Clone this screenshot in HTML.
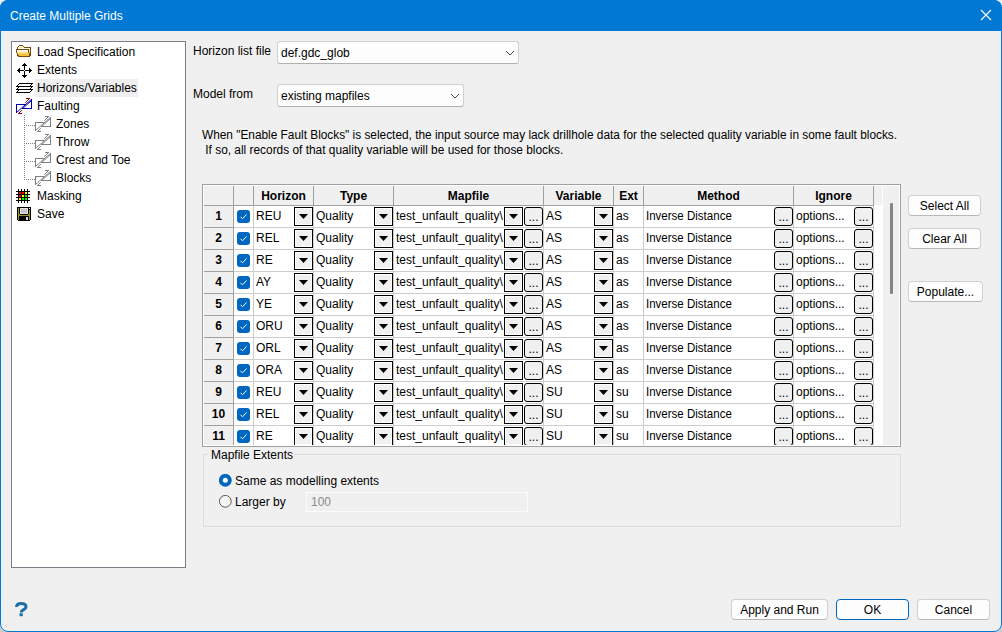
<!DOCTYPE html>
<html><head><meta charset="utf-8"><style>
html,body{margin:0;padding:0}
body{width:1002px;height:632px;position:relative;overflow:hidden;background:linear-gradient(#ececec 0 316px,#cdcdcd 316px);font-family:"Liberation Sans",sans-serif;font-size:12px;color:#000}
.a{position:absolute}
.t{position:absolute;white-space:nowrap;line-height:14px;font-size:12px}
.b{font-weight:bold}
.dd{width:19px;height:19px;box-sizing:border-box;border:1px solid #000;background:#f0f0f0;box-shadow:inset 0 0 0 1px #fff}
.el{width:19px;height:19px;box-sizing:border-box;border:1px solid #000;background:#f0f0f0;border-radius:3px}
.cb{width:13px;height:13px;background:#0067c0;border-radius:3px}
.btn{box-sizing:border-box;border:1px solid #d0d0d0;border-bottom-color:#b8b8b8;background:#fdfdfd;border-radius:4px}
</style></head>
<body>
<div class="a" style="left:0;top:0;width:1002px;height:632px;background:#f0f0f0;border-radius:8px"></div>
<div class="a" style="left:0;top:0;width:1002px;height:31px;background:#0078d4;border-radius:8px 8px 0 0"></div>
<div class="t" style="left:10px;top:9px;color:#fff">Create Multiple Grids</div>
<svg class="a" style="left:980px;top:9px" width="12" height="12" viewBox="0 0 12 12"><path d="M1 1L11 11M11 1L1 11" stroke="#fff" stroke-width="1.1"/></svg>
<div class="a" style="left:11px;top:41px;width:175px;height:527px;background:#fff;border:1px solid #7a7f88;box-sizing:border-box"></div>
<div class="a" style="left:35px;top:79px;width:103px;height:18px;background:#efefef"></div>
<div class="t" style="left:37px;top:45px;">Load Specification</div>
<div class="t" style="left:37px;top:63px;">Extents</div>
<div class="t" style="left:37px;top:81px;">Horizons/Variables</div>
<div class="t" style="left:37px;top:99px;">Faulting</div>
<div class="t" style="left:56px;top:117px;">Zones</div>
<div class="t" style="left:56px;top:135px;">Throw</div>
<div class="t" style="left:56px;top:153px;">Crest and Toe</div>
<div class="t" style="left:56px;top:171px;">Blocks</div>
<div class="t" style="left:37px;top:189px;">Masking</div>
<div class="t" style="left:37px;top:207px;">Save</div>
<svg class="a" style="left:16px;top:45px" width="15" height="12" viewBox="0 0 15 12" shape-rendering="crispEdges"><rect x="3" y="0" width="4" height="1" fill="#7a4a12"/><rect x="2" y="1" width="1" height="1" fill="#7a4a12"/><rect x="3" y="1" width="4" height="1" fill="#fffbee"/><rect x="7" y="1" width="1" height="1" fill="#7a4a12"/><rect x="1" y="2" width="1" height="1" fill="#7a4a12"/><rect x="2" y="2" width="1" height="1" fill="#fffbee"/><rect x="3" y="2" width="4" height="1" fill="#ffe48a"/><rect x="7" y="2" width="1" height="1" fill="#fffbee"/><rect x="8" y="2" width="7" height="1" fill="#7a4a12"/><rect x="1" y="3" width="1" height="1" fill="#7a4a12"/><rect x="2" y="3" width="12" height="1" fill="#fffbee"/><rect x="14" y="3" width="1" height="1" fill="#7a4a12"/><rect x="0" y="4" width="13" height="1" fill="#7a4a12"/><rect x="13" y="4" width="1" height="1" fill="#ffe48a"/><rect x="14" y="4" width="1" height="1" fill="#7a4a12"/><rect x="0" y="5" width="1" height="1" fill="#7a4a12"/><rect x="1" y="5" width="11" height="1" fill="#fffbee"/><rect x="12" y="5" width="1" height="1" fill="#7a4a12"/><rect x="13" y="5" width="1" height="1" fill="#ffe48a"/><rect x="14" y="5" width="1" height="1" fill="#7a4a12"/><rect x="0" y="6" width="1" height="1" fill="#7a4a12"/><rect x="1" y="6" width="11" height="1" fill="#fffbee"/><rect x="12" y="6" width="1" height="1" fill="#7a4a12"/><rect x="13" y="6" width="1" height="1" fill="#ffe48a"/><rect x="14" y="6" width="1" height="1" fill="#7a4a12"/><rect x="0" y="7" width="1" height="1" fill="#7a4a12"/><rect x="1" y="7" width="11" height="1" fill="#ffe27a"/><rect x="12" y="7" width="1" height="1" fill="#7a4a12"/><rect x="13" y="7" width="1" height="1" fill="#ffe48a"/><rect x="14" y="7" width="1" height="1" fill="#7a4a12"/><rect x="1" y="8" width="1" height="1" fill="#7a4a12"/><rect x="2" y="8" width="11" height="1" fill="#ffd45c"/><rect x="13" y="8" width="2" height="1" fill="#7a4a12"/><rect x="1" y="9" width="1" height="1" fill="#7a4a12"/><rect x="2" y="9" width="11" height="1" fill="#f8c040"/><rect x="13" y="9" width="2" height="1" fill="#7a4a12"/><rect x="1" y="10" width="2" height="1" fill="#7a4a12"/><rect x="3" y="10" width="10" height="1" fill="#f8c040"/><rect x="13" y="10" width="2" height="1" fill="#7a4a12"/><rect x="2" y="11" width="12" height="1" fill="#7a4a12"/></svg>
<svg class="a" style="left:17px;top:63px" width="15" height="15" viewBox="0 0 15 15" shape-rendering="crispEdges"><rect x="7" y="0" width="1" height="1" fill="#000"/><rect x="6" y="1" width="3" height="1" fill="#000"/><rect x="5" y="2" width="5" height="1" fill="#000"/><rect x="7" y="3" width="1" height="1" fill="#000"/><rect x="7" y="4" width="1" height="1" fill="#000"/><rect x="2" y="5" width="1" height="1" fill="#000"/><rect x="7" y="5" width="1" height="1" fill="#000"/><rect x="12" y="5" width="1" height="1" fill="#000"/><rect x="1" y="6" width="2" height="1" fill="#000"/><rect x="7" y="6" width="1" height="1" fill="#000"/><rect x="12" y="6" width="2" height="1" fill="#000"/><rect x="0" y="7" width="7" height="1" fill="#000"/><rect x="8" y="7" width="7" height="1" fill="#000"/><rect x="1" y="8" width="2" height="1" fill="#000"/><rect x="7" y="8" width="1" height="1" fill="#000"/><rect x="12" y="8" width="2" height="1" fill="#000"/><rect x="2" y="9" width="1" height="1" fill="#000"/><rect x="7" y="9" width="1" height="1" fill="#000"/><rect x="12" y="9" width="1" height="1" fill="#000"/><rect x="7" y="10" width="1" height="1" fill="#000"/><rect x="7" y="11" width="1" height="1" fill="#000"/><rect x="5" y="12" width="5" height="1" fill="#000"/><rect x="6" y="13" width="3" height="1" fill="#000"/><rect x="7" y="14" width="1" height="1" fill="#000"/></svg>
<svg class="a" style="left:16px;top:83px" width="17" height="10" viewBox="0 0 17 10" shape-rendering="crispEdges"><rect x="3" y="0" width="14" height="1" fill="#000"/><rect x="2" y="1" width="1" height="1" fill="#000"/><rect x="15" y="1" width="1" height="1" fill="#000"/><rect x="1" y="2" width="1" height="1" fill="#000"/><rect x="14" y="2" width="1" height="1" fill="#000"/><rect x="0" y="3" width="17" height="1" fill="#000"/><rect x="2" y="4" width="1" height="1" fill="#000"/><rect x="15" y="4" width="1" height="1" fill="#000"/><rect x="1" y="5" width="1" height="1" fill="#000"/><rect x="14" y="5" width="1" height="1" fill="#000"/><rect x="0" y="6" width="17" height="1" fill="#000"/><rect x="2" y="7" width="1" height="1" fill="#000"/><rect x="15" y="7" width="1" height="1" fill="#000"/><rect x="1" y="8" width="1" height="1" fill="#000"/><rect x="14" y="8" width="1" height="1" fill="#000"/><rect x="0" y="9" width="14" height="1" fill="#000"/></svg>
<svg class="a" style="left:16px;top:98px" width="17" height="17" viewBox="0 0 17 17"><path d="M0 6.5H9M0.5 6V15M0.3 14.7L15.6 1.2M15.5 1V11M6 10.5H16M6.6 10.6L15.4 2.6" fill="none" stroke="#0000a8" stroke-width="1.0"/><path d="M9.2 4.8L13.2 0.8M10 0.5H14M5.8 12.2L2.8 15.2M2 15.5H6" fill="none" stroke="#a00000" stroke-width="1.0"/></svg>
<svg class="a" style="left:35px;top:116px" width="17" height="17" viewBox="0 0 17 17"><path d="M0 6.5H9M0.5 6V15M0.3 14.7L15.6 1.2M15.5 1V11M6 10.5H16M6.6 10.6L15.4 2.6" fill="none" stroke="#808080" stroke-width="1.0"/><path d="M9.2 4.8L13.2 0.8M10 0.5H14M5.8 12.2L2.8 15.2M2 15.5H6" fill="none" stroke="#808080" stroke-width="1.0"/></svg>
<svg class="a" style="left:35px;top:134px" width="17" height="17" viewBox="0 0 17 17"><path d="M0 6.5H9M0.5 6V15M0.3 14.7L15.6 1.2M15.5 1V11M6 10.5H16M6.6 10.6L15.4 2.6" fill="none" stroke="#808080" stroke-width="1.0"/><path d="M9.2 4.8L13.2 0.8M10 0.5H14M5.8 12.2L2.8 15.2M2 15.5H6" fill="none" stroke="#808080" stroke-width="1.0"/></svg>
<svg class="a" style="left:35px;top:152px" width="17" height="17" viewBox="0 0 17 17"><path d="M0 6.5H9M0.5 6V15M0.3 14.7L15.6 1.2M15.5 1V11M6 10.5H16M6.6 10.6L15.4 2.6" fill="none" stroke="#808080" stroke-width="1.0"/><path d="M9.2 4.8L13.2 0.8M10 0.5H14M5.8 12.2L2.8 15.2M2 15.5H6" fill="none" stroke="#808080" stroke-width="1.0"/></svg>
<svg class="a" style="left:35px;top:170px" width="17" height="17" viewBox="0 0 17 17"><path d="M0 6.5H9M0.5 6V15M0.3 14.7L15.6 1.2M15.5 1V11M6 10.5H16M6.6 10.6L15.4 2.6" fill="none" stroke="#808080" stroke-width="1.0"/><path d="M9.2 4.8L13.2 0.8M10 0.5H14M5.8 12.2L2.8 15.2M2 15.5H6" fill="none" stroke="#808080" stroke-width="1.0"/></svg>
<div class="a" style="left:24px;top:115px;width:1px;height:65px;background:repeating-linear-gradient(#808080 0 1px,transparent 1px 2px)"></div>
<div class="a" style="left:26px;top:125px;width:9px;height:1px;background:repeating-linear-gradient(90deg,#808080 0 1px,transparent 1px 2px)"></div>
<div class="a" style="left:26px;top:143px;width:9px;height:1px;background:repeating-linear-gradient(90deg,#808080 0 1px,transparent 1px 2px)"></div>
<div class="a" style="left:26px;top:161px;width:9px;height:1px;background:repeating-linear-gradient(90deg,#808080 0 1px,transparent 1px 2px)"></div>
<div class="a" style="left:26px;top:179px;width:9px;height:1px;background:repeating-linear-gradient(90deg,#808080 0 1px,transparent 1px 2px)"></div>
<svg class="a" style="left:16px;top:189px" width="14" height="14" viewBox="0 0 14 14" shape-rendering="crispEdges"><rect x="2" y="0" width="1" height="1" fill="#000"/><rect x="5" y="0" width="1" height="1" fill="#000"/><rect x="8" y="0" width="1" height="1" fill="#000"/><rect x="11" y="0" width="1" height="1" fill="#000"/><rect x="2" y="1" width="1" height="1" fill="#000"/><rect x="5" y="1" width="1" height="1" fill="#000"/><rect x="8" y="1" width="1" height="1" fill="#000"/><rect x="11" y="1" width="1" height="1" fill="#000"/><rect x="0" y="2" width="14" height="1" fill="#000"/><rect x="2" y="3" width="1" height="1" fill="#000"/><rect x="3" y="3" width="2" height="1" fill="#ff0000"/><rect x="5" y="3" width="1" height="1" fill="#000"/><rect x="6" y="3" width="2" height="1" fill="#ff0000"/><rect x="8" y="3" width="1" height="1" fill="#000"/><rect x="9" y="3" width="2" height="1" fill="#ffff00"/><rect x="11" y="3" width="1" height="1" fill="#000"/><rect x="2" y="4" width="1" height="1" fill="#000"/><rect x="3" y="4" width="2" height="1" fill="#ff0000"/><rect x="5" y="4" width="1" height="1" fill="#000"/><rect x="6" y="4" width="2" height="1" fill="#ff0000"/><rect x="8" y="4" width="1" height="1" fill="#000"/><rect x="9" y="4" width="2" height="1" fill="#ffff00"/><rect x="11" y="4" width="1" height="1" fill="#000"/><rect x="0" y="5" width="14" height="1" fill="#000"/><rect x="2" y="6" width="1" height="1" fill="#000"/><rect x="3" y="6" width="2" height="1" fill="#ff0000"/><rect x="5" y="6" width="1" height="1" fill="#000"/><rect x="6" y="6" width="2" height="1" fill="#ffff00"/><rect x="8" y="6" width="1" height="1" fill="#000"/><rect x="9" y="6" width="2" height="1" fill="#00ff00"/><rect x="11" y="6" width="1" height="1" fill="#000"/><rect x="2" y="7" width="1" height="1" fill="#000"/><rect x="3" y="7" width="2" height="1" fill="#ff0000"/><rect x="5" y="7" width="1" height="1" fill="#000"/><rect x="6" y="7" width="2" height="1" fill="#ffff00"/><rect x="8" y="7" width="1" height="1" fill="#000"/><rect x="9" y="7" width="2" height="1" fill="#00ff00"/><rect x="11" y="7" width="1" height="1" fill="#000"/><rect x="0" y="8" width="14" height="1" fill="#000"/><rect x="2" y="9" width="1" height="1" fill="#000"/><rect x="3" y="9" width="2" height="1" fill="#ffff00"/><rect x="5" y="9" width="1" height="1" fill="#000"/><rect x="6" y="9" width="2" height="1" fill="#00ff00"/><rect x="8" y="9" width="1" height="1" fill="#000"/><rect x="9" y="9" width="2" height="1" fill="#00ff00"/><rect x="11" y="9" width="1" height="1" fill="#000"/><rect x="2" y="10" width="1" height="1" fill="#000"/><rect x="3" y="10" width="2" height="1" fill="#ffff00"/><rect x="5" y="10" width="1" height="1" fill="#000"/><rect x="6" y="10" width="2" height="1" fill="#00ff00"/><rect x="8" y="10" width="1" height="1" fill="#000"/><rect x="9" y="10" width="2" height="1" fill="#00ff00"/><rect x="11" y="10" width="1" height="1" fill="#000"/><rect x="0" y="11" width="14" height="1" fill="#000"/><rect x="2" y="12" width="1" height="1" fill="#000"/><rect x="5" y="12" width="1" height="1" fill="#000"/><rect x="8" y="12" width="1" height="1" fill="#000"/><rect x="11" y="12" width="1" height="1" fill="#000"/><rect x="2" y="13" width="1" height="1" fill="#000"/><rect x="5" y="13" width="1" height="1" fill="#000"/><rect x="8" y="13" width="1" height="1" fill="#000"/><rect x="11" y="13" width="1" height="1" fill="#000"/></svg>
<svg class="a" style="left:17px;top:207px" width="14" height="14" viewBox="0 0 14 14" shape-rendering="crispEdges"><rect x="0" y="0" width="14" height="1" fill="#000"/><rect x="0" y="1" width="1" height="1" fill="#000"/><rect x="1" y="1" width="1" height="1" fill="#9a9418"/><rect x="2" y="1" width="1" height="1" fill="#000"/><rect x="3" y="1" width="8" height="1" fill="#e4e4e4"/><rect x="11" y="1" width="1" height="1" fill="#000"/><rect x="12" y="1" width="1" height="1" fill="#fff"/><rect x="13" y="1" width="1" height="1" fill="#000"/><rect x="0" y="2" width="1" height="1" fill="#000"/><rect x="1" y="2" width="1" height="1" fill="#9a9418"/><rect x="2" y="2" width="1" height="1" fill="#000"/><rect x="3" y="2" width="1" height="1" fill="#e4e4e4"/><rect x="4" y="2" width="6" height="1" fill="#c4c4c4"/><rect x="10" y="2" width="1" height="1" fill="#e4e4e4"/><rect x="11" y="2" width="3" height="1" fill="#000"/><rect x="0" y="3" width="1" height="1" fill="#000"/><rect x="1" y="3" width="1" height="1" fill="#9a9418"/><rect x="2" y="3" width="1" height="1" fill="#000"/><rect x="3" y="3" width="1" height="1" fill="#e4e4e4"/><rect x="4" y="3" width="6" height="1" fill="#c4c4c4"/><rect x="10" y="3" width="1" height="1" fill="#e4e4e4"/><rect x="11" y="3" width="1" height="1" fill="#000"/><rect x="12" y="3" width="1" height="1" fill="#9a9418"/><rect x="13" y="3" width="1" height="1" fill="#000"/><rect x="0" y="4" width="1" height="1" fill="#000"/><rect x="1" y="4" width="1" height="1" fill="#9a9418"/><rect x="2" y="4" width="1" height="1" fill="#000"/><rect x="3" y="4" width="1" height="1" fill="#e4e4e4"/><rect x="4" y="4" width="6" height="1" fill="#c4c4c4"/><rect x="10" y="4" width="1" height="1" fill="#e4e4e4"/><rect x="11" y="4" width="1" height="1" fill="#000"/><rect x="12" y="4" width="1" height="1" fill="#9a9418"/><rect x="13" y="4" width="1" height="1" fill="#000"/><rect x="0" y="5" width="1" height="1" fill="#000"/><rect x="1" y="5" width="1" height="1" fill="#9a9418"/><rect x="2" y="5" width="1" height="1" fill="#000"/><rect x="3" y="5" width="1" height="1" fill="#e4e4e4"/><rect x="4" y="5" width="6" height="1" fill="#c4c4c4"/><rect x="10" y="5" width="1" height="1" fill="#e4e4e4"/><rect x="11" y="5" width="1" height="1" fill="#000"/><rect x="12" y="5" width="1" height="1" fill="#9a9418"/><rect x="13" y="5" width="1" height="1" fill="#000"/><rect x="0" y="6" width="1" height="1" fill="#000"/><rect x="1" y="6" width="1" height="1" fill="#9a9418"/><rect x="2" y="6" width="1" height="1" fill="#000"/><rect x="3" y="6" width="8" height="1" fill="#e4e4e4"/><rect x="11" y="6" width="1" height="1" fill="#000"/><rect x="12" y="6" width="1" height="1" fill="#9a9418"/><rect x="13" y="6" width="1" height="1" fill="#000"/><rect x="0" y="7" width="1" height="1" fill="#000"/><rect x="1" y="7" width="2" height="1" fill="#9a9418"/><rect x="3" y="7" width="8" height="1" fill="#000"/><rect x="11" y="7" width="2" height="1" fill="#9a9418"/><rect x="13" y="7" width="1" height="1" fill="#000"/><rect x="0" y="8" width="1" height="1" fill="#000"/><rect x="1" y="8" width="12" height="1" fill="#9a9418"/><rect x="13" y="8" width="1" height="1" fill="#000"/><rect x="0" y="9" width="1" height="1" fill="#000"/><rect x="1" y="9" width="1" height="1" fill="#9a9418"/><rect x="2" y="9" width="10" height="1" fill="#000"/><rect x="12" y="9" width="1" height="1" fill="#9a9418"/><rect x="13" y="9" width="1" height="1" fill="#000"/><rect x="0" y="10" width="1" height="1" fill="#000"/><rect x="1" y="10" width="1" height="1" fill="#9a9418"/><rect x="2" y="10" width="7" height="1" fill="#000"/><rect x="9" y="10" width="2" height="1" fill="#d8d8d8"/><rect x="11" y="10" width="1" height="1" fill="#000"/><rect x="12" y="10" width="1" height="1" fill="#9a9418"/><rect x="13" y="10" width="1" height="1" fill="#000"/><rect x="0" y="11" width="1" height="1" fill="#000"/><rect x="1" y="11" width="1" height="1" fill="#9a9418"/><rect x="2" y="11" width="7" height="1" fill="#000"/><rect x="9" y="11" width="2" height="1" fill="#d8d8d8"/><rect x="11" y="11" width="1" height="1" fill="#000"/><rect x="12" y="11" width="1" height="1" fill="#9a9418"/><rect x="13" y="11" width="1" height="1" fill="#000"/><rect x="0" y="12" width="1" height="1" fill="#000"/><rect x="1" y="12" width="1" height="1" fill="#9a9418"/><rect x="2" y="12" width="7" height="1" fill="#000"/><rect x="9" y="12" width="2" height="1" fill="#d8d8d8"/><rect x="11" y="12" width="1" height="1" fill="#000"/><rect x="12" y="12" width="1" height="1" fill="#9a9418"/><rect x="13" y="12" width="1" height="1" fill="#000"/><rect x="1" y="13" width="12" height="1" fill="#000"/></svg>
<div class="t" style="left:193px;top:44px;">Horizon list file</div>
<div class="a" style="left:277px;top:41px;width:242px;height:23px;background:#fdfdfd;border:1px solid #d0d0d0;border-bottom-color:#b0b0b0;border-radius:3px;box-sizing:border-box"></div>
<div class="t" style="left:281px;top:46px;">def.gdc_glob</div>
<svg class="a" style="left:505px;top:50px" width="10" height="6" viewBox="0 0 10 6"><path d="M1 1L5 5L9 1" fill="none" stroke="#484848" stroke-width="1"/></svg>
<div class="t" style="left:193px;top:87px;">Model from</div>
<div class="a" style="left:277px;top:84px;width:187px;height:23px;background:#fdfdfd;border:1px solid #d0d0d0;border-bottom-color:#b0b0b0;border-radius:3px;box-sizing:border-box"></div>
<div class="t" style="left:281px;top:89px;">existing mapfiles</div>
<svg class="a" style="left:450px;top:93px" width="10" height="6" viewBox="0 0 10 6"><path d="M1 1L5 5L9 1" fill="none" stroke="#484848" stroke-width="1"/></svg>
<div class="t" style="left:202px;top:128px;white-space:pre;transform:scaleX(0.987);transform-origin:0 0">When "Enable Fault Blocks" is selected, the input source may lack drillhole data for the selected quality variable in some fault blocks.</div>
<div class="t" style="left:202px;top:143px;white-space:pre;transform:scaleX(0.99);transform-origin:0 0"> If so, all records of that quality variable will be used for those blocks.</div>
<div class="a" style="left:202px;top:184px;width:699px;height:263px;background:#fff;border:1px solid #a0a0a0;box-sizing:border-box"></div>
<div class="a" style="left:204px;top:186px;width:695px;height:259px;overflow:hidden">
<div class="a" style="left:0px;top:0px;width:678px;height:19px;background:#f0f0f0"></div>
<div class="a" style="left:0px;top:20px;width:29px;height:240px;background:#f0f0f0"></div>
<div class="a" style="left:0px;top:19px;width:670px;height:1px;background:#a0a0a0"></div>
<div class="a" style="left:0px;top:41px;width:29px;height:1px;background:#a0a0a0"></div>
<div class="a" style="left:30px;top:41px;width:640px;height:1px;background:#cdcdcd"></div>
<div class="a" style="left:0px;top:63px;width:29px;height:1px;background:#a0a0a0"></div>
<div class="a" style="left:30px;top:63px;width:640px;height:1px;background:#cdcdcd"></div>
<div class="a" style="left:0px;top:85px;width:29px;height:1px;background:#a0a0a0"></div>
<div class="a" style="left:30px;top:85px;width:640px;height:1px;background:#cdcdcd"></div>
<div class="a" style="left:0px;top:107px;width:29px;height:1px;background:#a0a0a0"></div>
<div class="a" style="left:30px;top:107px;width:640px;height:1px;background:#cdcdcd"></div>
<div class="a" style="left:0px;top:129px;width:29px;height:1px;background:#a0a0a0"></div>
<div class="a" style="left:30px;top:129px;width:640px;height:1px;background:#cdcdcd"></div>
<div class="a" style="left:0px;top:151px;width:29px;height:1px;background:#a0a0a0"></div>
<div class="a" style="left:30px;top:151px;width:640px;height:1px;background:#cdcdcd"></div>
<div class="a" style="left:0px;top:173px;width:29px;height:1px;background:#a0a0a0"></div>
<div class="a" style="left:30px;top:173px;width:640px;height:1px;background:#cdcdcd"></div>
<div class="a" style="left:0px;top:195px;width:29px;height:1px;background:#a0a0a0"></div>
<div class="a" style="left:30px;top:195px;width:640px;height:1px;background:#cdcdcd"></div>
<div class="a" style="left:0px;top:217px;width:29px;height:1px;background:#a0a0a0"></div>
<div class="a" style="left:30px;top:217px;width:640px;height:1px;background:#cdcdcd"></div>
<div class="a" style="left:0px;top:239px;width:29px;height:1px;background:#a0a0a0"></div>
<div class="a" style="left:30px;top:239px;width:640px;height:1px;background:#cdcdcd"></div>
<div class="a" style="left:0px;top:261px;width:29px;height:1px;background:#a0a0a0"></div>
<div class="a" style="left:30px;top:261px;width:640px;height:1px;background:#cdcdcd"></div>
<div class="a" style="left:29px;top:0px;width:1px;height:19px;background:#a0a0a0"></div>
<div class="a" style="left:29px;top:20px;width:1px;height:240px;background:#a0a0a0"></div>
<div class="a" style="left:49px;top:0px;width:1px;height:19px;background:#a0a0a0"></div>
<div class="a" style="left:49px;top:20px;width:1px;height:240px;background:#cdcdcd"></div>
<div class="a" style="left:109px;top:0px;width:1px;height:19px;background:#a0a0a0"></div>
<div class="a" style="left:109px;top:20px;width:1px;height:240px;background:#cdcdcd"></div>
<div class="t b" style="left:50px;top:3px;width:59px;text-align:center">Horizon</div>
<div class="a" style="left:189px;top:0px;width:1px;height:19px;background:#a0a0a0"></div>
<div class="a" style="left:189px;top:20px;width:1px;height:240px;background:#cdcdcd"></div>
<div class="t b" style="left:110px;top:3px;width:79px;text-align:center">Type</div>
<div class="a" style="left:339px;top:0px;width:1px;height:19px;background:#a0a0a0"></div>
<div class="a" style="left:339px;top:20px;width:1px;height:240px;background:#cdcdcd"></div>
<div class="t b" style="left:190px;top:3px;width:149px;text-align:center">Mapfile</div>
<div class="a" style="left:409px;top:0px;width:1px;height:19px;background:#a0a0a0"></div>
<div class="a" style="left:409px;top:20px;width:1px;height:240px;background:#cdcdcd"></div>
<div class="t b" style="left:340px;top:3px;width:69px;text-align:center">Variable</div>
<div class="a" style="left:439px;top:0px;width:1px;height:19px;background:#a0a0a0"></div>
<div class="a" style="left:439px;top:20px;width:1px;height:240px;background:#cdcdcd"></div>
<div class="t b" style="left:410px;top:3px;width:29px;text-align:center">Ext</div>
<div class="a" style="left:589px;top:0px;width:1px;height:19px;background:#a0a0a0"></div>
<div class="a" style="left:589px;top:20px;width:1px;height:240px;background:#cdcdcd"></div>
<div class="t b" style="left:440px;top:3px;width:149px;text-align:center">Method</div>
<div class="a" style="left:669px;top:0px;width:1px;height:19px;background:#a0a0a0"></div>
<div class="a" style="left:669px;top:20px;width:1px;height:240px;background:#cdcdcd"></div>
<div class="t b" style="left:590px;top:3px;width:79px;text-align:center">Ignore</div>
<div class="a" style="left:679px;top:0px;width:16px;height:260px;background:#f0f0f0"></div>
<div class="a" style="left:686px;top:17px;width:3px;height:91px;background:#858585;border-radius:1px"></div>
<div class="t b" style="left:0px;top:23px;width:29px;text-align:center">1</div>
<div class="a cb" style="left:33px;top:24px"><svg width="13" height="13" viewBox="0 0 13 13" style="position:absolute;left:0;top:0"><path d="M3.5 6.8L5.5 8.8L9.5 4.5" fill="none" stroke="#fff" stroke-width="1"/></svg></div>
<div class="t" style="left:52px;top:23px;">REU</div>
<div class="a dd" style="left:90px;top:21px"><svg width="9" height="5" style="position:absolute;left:4px;top:6px"><path d="M0 0H9L4.5 5Z" fill="#000"/></svg></div>
<div class="t" style="left:112px;top:23px;">Quality</div>
<div class="a dd" style="left:170px;top:21px"><svg width="9" height="5" style="position:absolute;left:4px;top:6px"><path d="M0 0H9L4.5 5Z" fill="#000"/></svg></div>
<div class="a" style="left:192px;top:23px;width:108px;height:14px;overflow:hidden"><div class="t" style="left:0;top:0">test_unfault_quality\</div></div>
<div class="a dd" style="left:300px;top:21px"><svg width="9" height="5" style="position:absolute;left:4px;top:6px"><path d="M0 0H9L4.5 5Z" fill="#000"/></svg></div>
<div class="a el" style="left:320px;top:21px"><div class="t" style="left:0;top:2px;width:17px;text-align:center">...</div></div>
<div class="t" style="left:342px;top:23px;">AS</div>
<div class="a dd" style="left:390px;top:21px"><svg width="9" height="5" style="position:absolute;left:4px;top:6px"><path d="M0 0H9L4.5 5Z" fill="#000"/></svg></div>
<div class="t" style="left:412px;top:23px;">as</div>
<div class="t" style="left:442px;top:23px;transform:scaleX(0.96);transform-origin:0 0">Inverse Distance</div>
<div class="a el" style="left:570px;top:21px"><div class="t" style="left:0;top:2px;width:17px;text-align:center">...</div></div>
<div class="t" style="left:592px;top:23px;">options...</div>
<div class="a el" style="left:650px;top:21px"><div class="t" style="left:0;top:2px;width:17px;text-align:center">...</div></div>
<div class="t b" style="left:0px;top:45px;width:29px;text-align:center">2</div>
<div class="a cb" style="left:33px;top:46px"><svg width="13" height="13" viewBox="0 0 13 13" style="position:absolute;left:0;top:0"><path d="M3.5 6.8L5.5 8.8L9.5 4.5" fill="none" stroke="#fff" stroke-width="1"/></svg></div>
<div class="t" style="left:52px;top:45px;">REL</div>
<div class="a dd" style="left:90px;top:43px"><svg width="9" height="5" style="position:absolute;left:4px;top:6px"><path d="M0 0H9L4.5 5Z" fill="#000"/></svg></div>
<div class="t" style="left:112px;top:45px;">Quality</div>
<div class="a dd" style="left:170px;top:43px"><svg width="9" height="5" style="position:absolute;left:4px;top:6px"><path d="M0 0H9L4.5 5Z" fill="#000"/></svg></div>
<div class="a" style="left:192px;top:45px;width:108px;height:14px;overflow:hidden"><div class="t" style="left:0;top:0">test_unfault_quality\</div></div>
<div class="a dd" style="left:300px;top:43px"><svg width="9" height="5" style="position:absolute;left:4px;top:6px"><path d="M0 0H9L4.5 5Z" fill="#000"/></svg></div>
<div class="a el" style="left:320px;top:43px"><div class="t" style="left:0;top:2px;width:17px;text-align:center">...</div></div>
<div class="t" style="left:342px;top:45px;">AS</div>
<div class="a dd" style="left:390px;top:43px"><svg width="9" height="5" style="position:absolute;left:4px;top:6px"><path d="M0 0H9L4.5 5Z" fill="#000"/></svg></div>
<div class="t" style="left:412px;top:45px;">as</div>
<div class="t" style="left:442px;top:45px;transform:scaleX(0.96);transform-origin:0 0">Inverse Distance</div>
<div class="a el" style="left:570px;top:43px"><div class="t" style="left:0;top:2px;width:17px;text-align:center">...</div></div>
<div class="t" style="left:592px;top:45px;">options...</div>
<div class="a el" style="left:650px;top:43px"><div class="t" style="left:0;top:2px;width:17px;text-align:center">...</div></div>
<div class="t b" style="left:0px;top:67px;width:29px;text-align:center">3</div>
<div class="a cb" style="left:33px;top:68px"><svg width="13" height="13" viewBox="0 0 13 13" style="position:absolute;left:0;top:0"><path d="M3.5 6.8L5.5 8.8L9.5 4.5" fill="none" stroke="#fff" stroke-width="1"/></svg></div>
<div class="t" style="left:52px;top:67px;">RE</div>
<div class="a dd" style="left:90px;top:65px"><svg width="9" height="5" style="position:absolute;left:4px;top:6px"><path d="M0 0H9L4.5 5Z" fill="#000"/></svg></div>
<div class="t" style="left:112px;top:67px;">Quality</div>
<div class="a dd" style="left:170px;top:65px"><svg width="9" height="5" style="position:absolute;left:4px;top:6px"><path d="M0 0H9L4.5 5Z" fill="#000"/></svg></div>
<div class="a" style="left:192px;top:67px;width:108px;height:14px;overflow:hidden"><div class="t" style="left:0;top:0">test_unfault_quality\</div></div>
<div class="a dd" style="left:300px;top:65px"><svg width="9" height="5" style="position:absolute;left:4px;top:6px"><path d="M0 0H9L4.5 5Z" fill="#000"/></svg></div>
<div class="a el" style="left:320px;top:65px"><div class="t" style="left:0;top:2px;width:17px;text-align:center">...</div></div>
<div class="t" style="left:342px;top:67px;">AS</div>
<div class="a dd" style="left:390px;top:65px"><svg width="9" height="5" style="position:absolute;left:4px;top:6px"><path d="M0 0H9L4.5 5Z" fill="#000"/></svg></div>
<div class="t" style="left:412px;top:67px;">as</div>
<div class="t" style="left:442px;top:67px;transform:scaleX(0.96);transform-origin:0 0">Inverse Distance</div>
<div class="a el" style="left:570px;top:65px"><div class="t" style="left:0;top:2px;width:17px;text-align:center">...</div></div>
<div class="t" style="left:592px;top:67px;">options...</div>
<div class="a el" style="left:650px;top:65px"><div class="t" style="left:0;top:2px;width:17px;text-align:center">...</div></div>
<div class="t b" style="left:0px;top:89px;width:29px;text-align:center">4</div>
<div class="a cb" style="left:33px;top:90px"><svg width="13" height="13" viewBox="0 0 13 13" style="position:absolute;left:0;top:0"><path d="M3.5 6.8L5.5 8.8L9.5 4.5" fill="none" stroke="#fff" stroke-width="1"/></svg></div>
<div class="t" style="left:52px;top:89px;">AY</div>
<div class="a dd" style="left:90px;top:87px"><svg width="9" height="5" style="position:absolute;left:4px;top:6px"><path d="M0 0H9L4.5 5Z" fill="#000"/></svg></div>
<div class="t" style="left:112px;top:89px;">Quality</div>
<div class="a dd" style="left:170px;top:87px"><svg width="9" height="5" style="position:absolute;left:4px;top:6px"><path d="M0 0H9L4.5 5Z" fill="#000"/></svg></div>
<div class="a" style="left:192px;top:89px;width:108px;height:14px;overflow:hidden"><div class="t" style="left:0;top:0">test_unfault_quality\</div></div>
<div class="a dd" style="left:300px;top:87px"><svg width="9" height="5" style="position:absolute;left:4px;top:6px"><path d="M0 0H9L4.5 5Z" fill="#000"/></svg></div>
<div class="a el" style="left:320px;top:87px"><div class="t" style="left:0;top:2px;width:17px;text-align:center">...</div></div>
<div class="t" style="left:342px;top:89px;">AS</div>
<div class="a dd" style="left:390px;top:87px"><svg width="9" height="5" style="position:absolute;left:4px;top:6px"><path d="M0 0H9L4.5 5Z" fill="#000"/></svg></div>
<div class="t" style="left:412px;top:89px;">as</div>
<div class="t" style="left:442px;top:89px;transform:scaleX(0.96);transform-origin:0 0">Inverse Distance</div>
<div class="a el" style="left:570px;top:87px"><div class="t" style="left:0;top:2px;width:17px;text-align:center">...</div></div>
<div class="t" style="left:592px;top:89px;">options...</div>
<div class="a el" style="left:650px;top:87px"><div class="t" style="left:0;top:2px;width:17px;text-align:center">...</div></div>
<div class="t b" style="left:0px;top:111px;width:29px;text-align:center">5</div>
<div class="a cb" style="left:33px;top:112px"><svg width="13" height="13" viewBox="0 0 13 13" style="position:absolute;left:0;top:0"><path d="M3.5 6.8L5.5 8.8L9.5 4.5" fill="none" stroke="#fff" stroke-width="1"/></svg></div>
<div class="t" style="left:52px;top:111px;">YE</div>
<div class="a dd" style="left:90px;top:109px"><svg width="9" height="5" style="position:absolute;left:4px;top:6px"><path d="M0 0H9L4.5 5Z" fill="#000"/></svg></div>
<div class="t" style="left:112px;top:111px;">Quality</div>
<div class="a dd" style="left:170px;top:109px"><svg width="9" height="5" style="position:absolute;left:4px;top:6px"><path d="M0 0H9L4.5 5Z" fill="#000"/></svg></div>
<div class="a" style="left:192px;top:111px;width:108px;height:14px;overflow:hidden"><div class="t" style="left:0;top:0">test_unfault_quality\</div></div>
<div class="a dd" style="left:300px;top:109px"><svg width="9" height="5" style="position:absolute;left:4px;top:6px"><path d="M0 0H9L4.5 5Z" fill="#000"/></svg></div>
<div class="a el" style="left:320px;top:109px"><div class="t" style="left:0;top:2px;width:17px;text-align:center">...</div></div>
<div class="t" style="left:342px;top:111px;">AS</div>
<div class="a dd" style="left:390px;top:109px"><svg width="9" height="5" style="position:absolute;left:4px;top:6px"><path d="M0 0H9L4.5 5Z" fill="#000"/></svg></div>
<div class="t" style="left:412px;top:111px;">as</div>
<div class="t" style="left:442px;top:111px;transform:scaleX(0.96);transform-origin:0 0">Inverse Distance</div>
<div class="a el" style="left:570px;top:109px"><div class="t" style="left:0;top:2px;width:17px;text-align:center">...</div></div>
<div class="t" style="left:592px;top:111px;">options...</div>
<div class="a el" style="left:650px;top:109px"><div class="t" style="left:0;top:2px;width:17px;text-align:center">...</div></div>
<div class="t b" style="left:0px;top:133px;width:29px;text-align:center">6</div>
<div class="a cb" style="left:33px;top:134px"><svg width="13" height="13" viewBox="0 0 13 13" style="position:absolute;left:0;top:0"><path d="M3.5 6.8L5.5 8.8L9.5 4.5" fill="none" stroke="#fff" stroke-width="1"/></svg></div>
<div class="t" style="left:52px;top:133px;">ORU</div>
<div class="a dd" style="left:90px;top:131px"><svg width="9" height="5" style="position:absolute;left:4px;top:6px"><path d="M0 0H9L4.5 5Z" fill="#000"/></svg></div>
<div class="t" style="left:112px;top:133px;">Quality</div>
<div class="a dd" style="left:170px;top:131px"><svg width="9" height="5" style="position:absolute;left:4px;top:6px"><path d="M0 0H9L4.5 5Z" fill="#000"/></svg></div>
<div class="a" style="left:192px;top:133px;width:108px;height:14px;overflow:hidden"><div class="t" style="left:0;top:0">test_unfault_quality\</div></div>
<div class="a dd" style="left:300px;top:131px"><svg width="9" height="5" style="position:absolute;left:4px;top:6px"><path d="M0 0H9L4.5 5Z" fill="#000"/></svg></div>
<div class="a el" style="left:320px;top:131px"><div class="t" style="left:0;top:2px;width:17px;text-align:center">...</div></div>
<div class="t" style="left:342px;top:133px;">AS</div>
<div class="a dd" style="left:390px;top:131px"><svg width="9" height="5" style="position:absolute;left:4px;top:6px"><path d="M0 0H9L4.5 5Z" fill="#000"/></svg></div>
<div class="t" style="left:412px;top:133px;">as</div>
<div class="t" style="left:442px;top:133px;transform:scaleX(0.96);transform-origin:0 0">Inverse Distance</div>
<div class="a el" style="left:570px;top:131px"><div class="t" style="left:0;top:2px;width:17px;text-align:center">...</div></div>
<div class="t" style="left:592px;top:133px;">options...</div>
<div class="a el" style="left:650px;top:131px"><div class="t" style="left:0;top:2px;width:17px;text-align:center">...</div></div>
<div class="t b" style="left:0px;top:155px;width:29px;text-align:center">7</div>
<div class="a cb" style="left:33px;top:156px"><svg width="13" height="13" viewBox="0 0 13 13" style="position:absolute;left:0;top:0"><path d="M3.5 6.8L5.5 8.8L9.5 4.5" fill="none" stroke="#fff" stroke-width="1"/></svg></div>
<div class="t" style="left:52px;top:155px;">ORL</div>
<div class="a dd" style="left:90px;top:153px"><svg width="9" height="5" style="position:absolute;left:4px;top:6px"><path d="M0 0H9L4.5 5Z" fill="#000"/></svg></div>
<div class="t" style="left:112px;top:155px;">Quality</div>
<div class="a dd" style="left:170px;top:153px"><svg width="9" height="5" style="position:absolute;left:4px;top:6px"><path d="M0 0H9L4.5 5Z" fill="#000"/></svg></div>
<div class="a" style="left:192px;top:155px;width:108px;height:14px;overflow:hidden"><div class="t" style="left:0;top:0">test_unfault_quality\</div></div>
<div class="a dd" style="left:300px;top:153px"><svg width="9" height="5" style="position:absolute;left:4px;top:6px"><path d="M0 0H9L4.5 5Z" fill="#000"/></svg></div>
<div class="a el" style="left:320px;top:153px"><div class="t" style="left:0;top:2px;width:17px;text-align:center">...</div></div>
<div class="t" style="left:342px;top:155px;">AS</div>
<div class="a dd" style="left:390px;top:153px"><svg width="9" height="5" style="position:absolute;left:4px;top:6px"><path d="M0 0H9L4.5 5Z" fill="#000"/></svg></div>
<div class="t" style="left:412px;top:155px;">as</div>
<div class="t" style="left:442px;top:155px;transform:scaleX(0.96);transform-origin:0 0">Inverse Distance</div>
<div class="a el" style="left:570px;top:153px"><div class="t" style="left:0;top:2px;width:17px;text-align:center">...</div></div>
<div class="t" style="left:592px;top:155px;">options...</div>
<div class="a el" style="left:650px;top:153px"><div class="t" style="left:0;top:2px;width:17px;text-align:center">...</div></div>
<div class="t b" style="left:0px;top:177px;width:29px;text-align:center">8</div>
<div class="a cb" style="left:33px;top:178px"><svg width="13" height="13" viewBox="0 0 13 13" style="position:absolute;left:0;top:0"><path d="M3.5 6.8L5.5 8.8L9.5 4.5" fill="none" stroke="#fff" stroke-width="1"/></svg></div>
<div class="t" style="left:52px;top:177px;">ORA</div>
<div class="a dd" style="left:90px;top:175px"><svg width="9" height="5" style="position:absolute;left:4px;top:6px"><path d="M0 0H9L4.5 5Z" fill="#000"/></svg></div>
<div class="t" style="left:112px;top:177px;">Quality</div>
<div class="a dd" style="left:170px;top:175px"><svg width="9" height="5" style="position:absolute;left:4px;top:6px"><path d="M0 0H9L4.5 5Z" fill="#000"/></svg></div>
<div class="a" style="left:192px;top:177px;width:108px;height:14px;overflow:hidden"><div class="t" style="left:0;top:0">test_unfault_quality\</div></div>
<div class="a dd" style="left:300px;top:175px"><svg width="9" height="5" style="position:absolute;left:4px;top:6px"><path d="M0 0H9L4.5 5Z" fill="#000"/></svg></div>
<div class="a el" style="left:320px;top:175px"><div class="t" style="left:0;top:2px;width:17px;text-align:center">...</div></div>
<div class="t" style="left:342px;top:177px;">AS</div>
<div class="a dd" style="left:390px;top:175px"><svg width="9" height="5" style="position:absolute;left:4px;top:6px"><path d="M0 0H9L4.5 5Z" fill="#000"/></svg></div>
<div class="t" style="left:412px;top:177px;">as</div>
<div class="t" style="left:442px;top:177px;transform:scaleX(0.96);transform-origin:0 0">Inverse Distance</div>
<div class="a el" style="left:570px;top:175px"><div class="t" style="left:0;top:2px;width:17px;text-align:center">...</div></div>
<div class="t" style="left:592px;top:177px;">options...</div>
<div class="a el" style="left:650px;top:175px"><div class="t" style="left:0;top:2px;width:17px;text-align:center">...</div></div>
<div class="t b" style="left:0px;top:199px;width:29px;text-align:center">9</div>
<div class="a cb" style="left:33px;top:200px"><svg width="13" height="13" viewBox="0 0 13 13" style="position:absolute;left:0;top:0"><path d="M3.5 6.8L5.5 8.8L9.5 4.5" fill="none" stroke="#fff" stroke-width="1"/></svg></div>
<div class="t" style="left:52px;top:199px;">REU</div>
<div class="a dd" style="left:90px;top:197px"><svg width="9" height="5" style="position:absolute;left:4px;top:6px"><path d="M0 0H9L4.5 5Z" fill="#000"/></svg></div>
<div class="t" style="left:112px;top:199px;">Quality</div>
<div class="a dd" style="left:170px;top:197px"><svg width="9" height="5" style="position:absolute;left:4px;top:6px"><path d="M0 0H9L4.5 5Z" fill="#000"/></svg></div>
<div class="a" style="left:192px;top:199px;width:108px;height:14px;overflow:hidden"><div class="t" style="left:0;top:0">test_unfault_quality\</div></div>
<div class="a dd" style="left:300px;top:197px"><svg width="9" height="5" style="position:absolute;left:4px;top:6px"><path d="M0 0H9L4.5 5Z" fill="#000"/></svg></div>
<div class="a el" style="left:320px;top:197px"><div class="t" style="left:0;top:2px;width:17px;text-align:center">...</div></div>
<div class="t" style="left:342px;top:199px;">SU</div>
<div class="a dd" style="left:390px;top:197px"><svg width="9" height="5" style="position:absolute;left:4px;top:6px"><path d="M0 0H9L4.5 5Z" fill="#000"/></svg></div>
<div class="t" style="left:412px;top:199px;">su</div>
<div class="t" style="left:442px;top:199px;transform:scaleX(0.96);transform-origin:0 0">Inverse Distance</div>
<div class="a el" style="left:570px;top:197px"><div class="t" style="left:0;top:2px;width:17px;text-align:center">...</div></div>
<div class="t" style="left:592px;top:199px;">options...</div>
<div class="a el" style="left:650px;top:197px"><div class="t" style="left:0;top:2px;width:17px;text-align:center">...</div></div>
<div class="t b" style="left:0px;top:221px;width:29px;text-align:center">10</div>
<div class="a cb" style="left:33px;top:222px"><svg width="13" height="13" viewBox="0 0 13 13" style="position:absolute;left:0;top:0"><path d="M3.5 6.8L5.5 8.8L9.5 4.5" fill="none" stroke="#fff" stroke-width="1"/></svg></div>
<div class="t" style="left:52px;top:221px;">REL</div>
<div class="a dd" style="left:90px;top:219px"><svg width="9" height="5" style="position:absolute;left:4px;top:6px"><path d="M0 0H9L4.5 5Z" fill="#000"/></svg></div>
<div class="t" style="left:112px;top:221px;">Quality</div>
<div class="a dd" style="left:170px;top:219px"><svg width="9" height="5" style="position:absolute;left:4px;top:6px"><path d="M0 0H9L4.5 5Z" fill="#000"/></svg></div>
<div class="a" style="left:192px;top:221px;width:108px;height:14px;overflow:hidden"><div class="t" style="left:0;top:0">test_unfault_quality\</div></div>
<div class="a dd" style="left:300px;top:219px"><svg width="9" height="5" style="position:absolute;left:4px;top:6px"><path d="M0 0H9L4.5 5Z" fill="#000"/></svg></div>
<div class="a el" style="left:320px;top:219px"><div class="t" style="left:0;top:2px;width:17px;text-align:center">...</div></div>
<div class="t" style="left:342px;top:221px;">SU</div>
<div class="a dd" style="left:390px;top:219px"><svg width="9" height="5" style="position:absolute;left:4px;top:6px"><path d="M0 0H9L4.5 5Z" fill="#000"/></svg></div>
<div class="t" style="left:412px;top:221px;">su</div>
<div class="t" style="left:442px;top:221px;transform:scaleX(0.96);transform-origin:0 0">Inverse Distance</div>
<div class="a el" style="left:570px;top:219px"><div class="t" style="left:0;top:2px;width:17px;text-align:center">...</div></div>
<div class="t" style="left:592px;top:221px;">options...</div>
<div class="a el" style="left:650px;top:219px"><div class="t" style="left:0;top:2px;width:17px;text-align:center">...</div></div>
<div class="t b" style="left:0px;top:243px;width:29px;text-align:center">11</div>
<div class="a cb" style="left:33px;top:244px"><svg width="13" height="13" viewBox="0 0 13 13" style="position:absolute;left:0;top:0"><path d="M3.5 6.8L5.5 8.8L9.5 4.5" fill="none" stroke="#fff" stroke-width="1"/></svg></div>
<div class="t" style="left:52px;top:243px;">RE</div>
<div class="a dd" style="left:90px;top:241px"><svg width="9" height="5" style="position:absolute;left:4px;top:6px"><path d="M0 0H9L4.5 5Z" fill="#000"/></svg></div>
<div class="t" style="left:112px;top:243px;">Quality</div>
<div class="a dd" style="left:170px;top:241px"><svg width="9" height="5" style="position:absolute;left:4px;top:6px"><path d="M0 0H9L4.5 5Z" fill="#000"/></svg></div>
<div class="a" style="left:192px;top:243px;width:108px;height:14px;overflow:hidden"><div class="t" style="left:0;top:0">test_unfault_quality\</div></div>
<div class="a dd" style="left:300px;top:241px"><svg width="9" height="5" style="position:absolute;left:4px;top:6px"><path d="M0 0H9L4.5 5Z" fill="#000"/></svg></div>
<div class="a el" style="left:320px;top:241px"><div class="t" style="left:0;top:2px;width:17px;text-align:center">...</div></div>
<div class="t" style="left:342px;top:243px;">SU</div>
<div class="a dd" style="left:390px;top:241px"><svg width="9" height="5" style="position:absolute;left:4px;top:6px"><path d="M0 0H9L4.5 5Z" fill="#000"/></svg></div>
<div class="t" style="left:412px;top:243px;">su</div>
<div class="t" style="left:442px;top:243px;transform:scaleX(0.96);transform-origin:0 0">Inverse Distance</div>
<div class="a el" style="left:570px;top:241px"><div class="t" style="left:0;top:2px;width:17px;text-align:center">...</div></div>
<div class="t" style="left:592px;top:243px;">options...</div>
<div class="a el" style="left:650px;top:241px"><div class="t" style="left:0;top:2px;width:17px;text-align:center">...</div></div>
</div>
<div class="a btn" style="left:908px;top:195px;width:73px;height:21px;"><div class="t" style="left:0;top:3px;width:100%;text-align:center">Select All</div></div>
<div class="a btn" style="left:908px;top:228px;width:73px;height:21px;"><div class="t" style="left:0;top:3px;width:100%;text-align:center">Clear All</div></div>
<div class="a btn" style="left:908px;top:281px;width:75px;height:21px;"><div class="t" style="left:0;top:3px;width:100%;text-align:center">Populate...</div></div>
<div class="a" style="left:203px;top:454px;width:698px;height:73px;border:1px solid #dcdcdc;box-sizing:border-box"></div>
<div class="a" style="left:208px;top:448px;width:86px;height:12px;background:#f0f0f0"></div>
<div class="t" style="left:211px;top:448px;">Mapfile Extents</div>
<svg class="a" style="left:219px;top:474px" width="14" height="14" viewBox="0 0 14 14"><circle cx="6.3" cy="6.3" r="6.4" fill="#0067c0"/><circle cx="6.3" cy="6.3" r="2.5" fill="#fff"/></svg>
<div class="t" style="left:235px;top:474px;">Same as modelling extents</div>
<svg class="a" style="left:219px;top:495px" width="14" height="14" viewBox="0 0 14 14"><circle cx="6.3" cy="6.3" r="5.9" fill="#f5f5f5" stroke="#5a5a5a" stroke-width="1"/></svg>
<div class="t" style="left:235px;top:495px;">Larger by</div>
<div class="a" style="left:306px;top:492px;width:222px;height:20px;border:1px solid #fbfbfb;box-sizing:border-box;background:#f0f0f0"></div>
<div class="t" style="left:311px;top:495px;color:#8a8a8a">100</div>
<svg class="a" style="left:14px;top:601px" width="15" height="17" viewBox="0 0 15 17"><path d="M2.6 5.9C2.6 3.3 4.8 2.5 7.2 2.5C10 2.5 12 3.8 12 5.7C12 7.5 10.6 8 9.2 8.9C8 9.6 7.2 10.1 7.2 11.4" fill="none" stroke="#1a6fa8" stroke-width="3"/><rect x="5.5" y="12.3" width="3.3" height="2.9" fill="#1a6fa8"/></svg>
<div class="a btn" style="left:731px;top:599px;width:97px;height:21px;"><div class="t" style="left:0;top:3px;width:100%;text-align:center">Apply and Run</div></div>
<div class="a btn" style="left:836px;top:599px;width:73px;height:21px;border:1px solid #0067c0;"><div class="t" style="left:0;top:3px;width:100%;text-align:center">OK</div></div>
<div class="a btn" style="left:917px;top:599px;width:73px;height:21px;"><div class="t" style="left:0;top:3px;width:100%;text-align:center">Cancel</div></div>
<div class="a" style="left:0;top:0;width:1002px;height:632px;border:1px solid #0078d4;border-radius:8px;box-sizing:border-box;pointer-events:none"></div>

</body></html>
